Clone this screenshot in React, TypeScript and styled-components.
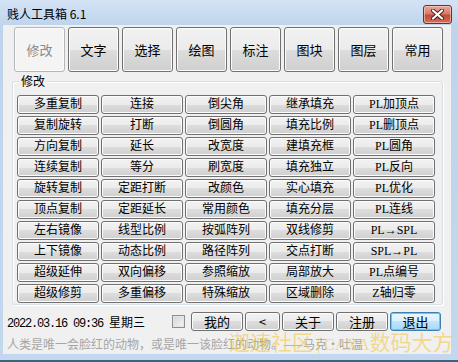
import styled, { createGlobalStyle } from 'styled-components';

const tabs = ['修改', '文字', '选择', '绘图', '标注', '图块', '图层', '常用'];

const tools = [
  '多重复制', '连接', '倒尖角', '继承填充', 'PL加顶点',
  '复制旋转', '打断', '倒圆角', '填充比例', 'PL删顶点',
  '方向复制', '延长', '改宽度', '建填充框', 'PL圆角',
  '连续复制', '等分', '刷宽度', '填充独立', 'PL反向',
  '旋转复制', '定距打断', '改颜色', '实心填充', 'PL优化',
  '顶点复制', '定距延长', '常用颜色', '填充分层', 'PL连线',
  '左右镜像', '线型比例', '按弧阵列', '双线修剪', 'PL→SPL',
  '上下镜像', '动态比例', '路径阵列', '交点打断', 'SPL→PL',
  '超级延伸', '双向偏移', '参照缩放', '局部放大', 'PL点编号',
  '超级修剪', '多重偏移', '特殊缩放', '区域删除', 'Z轴归零',
];

const App = () => {
  return (
    <>
      <GlobalStyle />
      <Window>
        <TitleBar>
          <Title>贱人工具箱 6.1</Title>
          <CloseButton>
            <svg width="13" height="11" viewBox="0 0 13 11">
              <path d="M2 1.5 L11 9.5 M11 1.5 L2 9.5" stroke="#4a1f1a" strokeWidth="4" strokeLinecap="round" />
              <path d="M2 1.5 L11 9.5 M11 1.5 L2 9.5" stroke="#fff" strokeWidth="2.2" strokeLinecap="round" />
            </svg>
          </CloseButton>
        </TitleBar>
        <Client>
          <TabRow>
            {tabs.map((t) => (
              <TabButton key={t} $active={t === '修改'}>{t}</TabButton>
            ))}
          </TabRow>
          <GroupBox>
            <GroupLabel>修改</GroupLabel>
            <Grid>
              {tools.map((t) => (
                <ToolButton key={t}>{t}</ToolButton>
              ))}
            </Grid>
          </GroupBox>
          <BottomRow>
            <DateText><Mono>2022.03.16 09:36 </Mono>星期三</DateText>
            <CheckBox />
            <WinButton $w={52}>我的</WinButton>
            <WinButton $w={35}>&lt;</WinButton>
            <WinButton $w={52}>关于</WinButton>
            <WinButton $w={52}>注册</WinButton>
            <WinButton $w={51} $primary>退出</WinButton>
          </BottomRow>
          <Status>人类是唯一会脸红的动物，或是唯一该脸红的动物。——马克·吐温</Status>
          <Watermark>迦速社区<Serif> | CAXA</Serif>数码大方</Watermark>
        </Client>
      </Window>
    </>
  )
}

const GlobalStyle = createGlobalStyle`
  body {
    margin: 0;
    font-family: "Noto Sans CJK SC", sans-serif;
  }
`

const Window = styled.div`
  width: 458px;
  height: 362px;
  box-sizing: border-box;
  padding: 0 7px 6px 3px;
  display: flex;
  flex-direction: column;
  background: linear-gradient(#d3e3f4 0px, #bed4ec 26px, #c3d8ee 100%);
  border-bottom: 2px solid #3f6280;
  overflow: hidden;
`

const TitleBar = styled.div`
  height: 25px;
  display: flex;
  align-items: flex-start;
  justify-content: space-between;
  margin-right: -1px;
  padding-left: 4px;
`

const Title = styled.div`
  margin-top: 5px;
  font-size: 12px;
  line-height: 18px;
  color: #000;
`

const CloseButton = styled.div`
  width: 29px;
  height: 19px;
  margin-top: 5px;
  box-sizing: border-box;
  border: 1px solid #6e2f27;
  border-radius: 3px;
  background: linear-gradient(#e9a89c 0%, #d77a69 45%, #c44a36 55%, #d0715d 100%);
  box-shadow: inset 0 0 0 1px rgba(255, 220, 210, 0.55);
  display: flex;
  align-items: center;
  justify-content: center;
`

const Client = styled.div`
  position: relative;
  flex: 1;
  background: #f0f0f0;
  display: flex;
  flex-direction: column;
`

const TabRow = styled.div`
  display: flex;
  gap: 3px;
  margin-top: 2px;
  padding-left: 11px;
`

const TabButton = styled.div<{ $active?: boolean }>`
  width: 51px;
  height: 45px;
  box-sizing: border-box;
  border: 1px solid ${(p) => (p.$active ? '#b3b7ba' : '#707070')};
  border-radius: 3px;
  background: ${(p) =>
    p.$active
      ? '#f4f4f4'
      : 'linear-gradient(#f2f2f2 0%, #ebebeb 50%, #dddddd 50%, #cfcfcf 100%)'};
  box-shadow: inset 0 0 0 1px #fbfbfb;
  color: ${(p) => (p.$active ? '#8a8a8a' : '#000')};
  font-size: 13px;
  display: flex;
  align-items: center;
  justify-content: center;
`

const GroupBox = styled.div`
  position: relative;
  margin: 9px 0 0 9px;
  width: 431px;
  height: 224px;
  box-sizing: border-box;
  border: 1px solid #d5dfe5;
  border-radius: 3px;
  box-shadow: inset 1px 1px 0 #fff, 1px 1px 0 #fff;
  padding: 13px 0 0 4px;
`

const GroupLabel = styled.span`
  position: absolute;
  left: 6px;
  top: -8px;
  padding: 0 2px;
  background: #f0f0f0;
  font-size: 12px;
  line-height: 14px;
  color: #000;
`

const Grid = styled.div`
  display: grid;
  grid-template-columns: repeat(5, 82px);
  grid-auto-rows: 19px;
  column-gap: 2px;
  row-gap: 2px;
`

const ToolButton = styled.div`
  box-sizing: border-box;
  border: 1px solid #707070;
  border-radius: 3px;
  background: linear-gradient(#f2f2f2 0%, #ebebeb 50%, #dddddd 50%, #cfcfcf 100%);
  box-shadow: inset 0 0 0 1px #fcfcfc;
  font-family: "Liberation Serif", "Noto Sans CJK SC", serif;
  font-size: 12px;
  line-height: 17px;
  text-align: center;
  color: #000;
  white-space: nowrap;
`

const BottomRow = styled.div`
  display: flex;
  align-items: center;
  gap: 2px;
  height: 19px;
  margin-top: 7px;
  padding-left: 4px;
`

const DateText = styled.div`
  width: 163px;
  font-size: 12px;
  color: #000;
  white-space: nowrap;
`

const Mono = styled.span`
  font-family: "Liberation Mono", monospace;
  letter-spacing: -1.2px;
`

const CheckBox = styled.span`
  width: 13px;
  height: 13px;
  box-sizing: border-box;
  border: 1px solid #8f8f8f;
  background: linear-gradient(135deg, #d4d4d4, #f6f6f6);
  box-shadow: inset 0 0 0 1px #e4e4e4;
  margin-right: 4px;
`

const WinButton = styled.div<{ $w: number; $primary?: boolean }>`
  width: ${(p) => p.$w}px;
  height: 19px;
  box-sizing: border-box;
  border: 1px solid ${(p) => (p.$primary ? '#3c7fb1' : '#707070')};
  border-radius: 3px;
  background: ${(p) =>
    p.$primary
      ? 'linear-gradient(#eaf6fd 0%, #d9f0fc 50%, #bee6fd 50%, #a7d9f5 100%)'
      : 'linear-gradient(#f2f2f2 0%, #ebebeb 50%, #dddddd 50%, #cfcfcf 100%)'};
  box-shadow: inset 0 0 0 1px ${(p) => (p.$primary ? '#48d7fb' : '#fcfcfc')};
  font-size: 13px;
  line-height: 17px;
  text-align: center;
  color: #000;
`

const Status = styled.div`
  margin-top: 5px;
  padding-left: 4px;
  font-size: 12px;
  line-height: 16px;
  color: #a6a6a6;
  white-space: nowrap;
`

const Watermark = styled.div`
  position: absolute;
  left: 226px;
  bottom: -3px;
  font-size: 21px;
  line-height: 24px;
  color: rgba(244, 196, 48, 0.55);
  white-space: nowrap;
`

const Serif = styled.span`
  font-family: "Liberation Serif", serif;
  font-size: 16px;
  white-space: pre;
`

export default App
